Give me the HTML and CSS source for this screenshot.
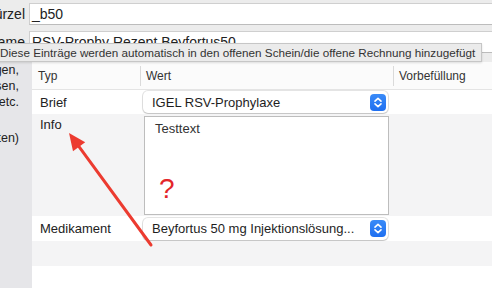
FILE: index.html
```html
<!DOCTYPE html>
<html lang="de">
<head>
<meta charset="utf-8">
<title>Vorlage</title>
<link rel="stylesheet" href="styles.css">
</head>
<body>
<div class="app">
  <div class="form-top">
    <div class="frow">
      <div class="flabel"><span>Kürzel</span></div>
      <div class="field">_b50</div>
    </div>
    <div class="frow">
      <div class="flabel"><span>Name</span></div>
      <div class="field">RSV-Prophy Rezept Beyfortus50</div>
    </div>
  </div>
  <div class="main">
    <div class="side">
      <div class="side-block"><span>Leistungen,<br>Diagnosen,<br>Medikamente etc.</span></div>
      <div class="side-block note"><span>(zu beachten)</span></div>
    </div>
    <div class="table">
      <div class="thead">
        <div class="th th-typ">Typ</div>
        <div class="sep"></div>
        <div class="th th-wert">Wert</div>
        <div class="sep"></div>
        <div class="th th-vor">Vorbefüllung</div>
      </div>
      <div class="tr tr-white">
        <div class="td td-typ">Brief</div>
        <div class="td td-wert">
          <div class="popup">
            <span class="popup-text">IGEL RSV-Prophylaxe</span>
            <span class="stepper"><svg width="16" height="17" viewBox="0 0 16 17"><path d="M5 7.2 L8 4.4 L11 7.2 M5 9.8 L8 12.6 L11 9.8" fill="none" stroke="#fff" stroke-width="1.6" stroke-linecap="round" stroke-linejoin="round"/></svg></span>
          </div>
        </div>
        <div class="td td-vor"></div>
      </div>
      <div class="tr tr-info">
        <div class="td td-typ td-top">Info</div>
        <div class="td td-wert td-top">
          <div class="textarea">
            <div class="ta-text">Testtext</div>
            <div class="qmark">?</div>
          </div>
        </div>
        <div class="td td-vor"></div>
      </div>
      <div class="tr tr-white tr-med">
        <div class="td td-typ">Medikament</div>
        <div class="td td-wert">
          <div class="popup">
            <span class="popup-text">Beyfortus 50 mg Injektionslösung...</span>
            <span class="stepper"><svg width="16" height="17" viewBox="0 0 16 17"><path d="M5 7.2 L8 4.4 L11 7.2 M5 9.8 L8 12.6 L11 9.8" fill="none" stroke="#fff" stroke-width="1.6" stroke-linecap="round" stroke-linejoin="round"/></svg></span>
          </div>
        </div>
        <div class="td td-vor"></div>
      </div>
      <div class="tr tr-empty"></div>
      <div class="tfill"></div>
    </div>
  </div>
  <div class="tooltip">Diese Einträge werden automatisch in den offenen Schein/die offene Rechnung hinzugefügt</div>
  <svg class="arrow" width="492" height="288" viewBox="0 0 492 288">
    <line x1="151" y1="245" x2="79" y2="146.7" stroke="#ec3b30" stroke-width="3" stroke-linecap="round"/>
    <polygon points="69,133 85.2,142.3 73,151.2" fill="#ec3b30"/>
  </svg>
</div>
</body>
</html>
```
FILE: styles.css
```css
* { box-sizing: border-box; }
html, body { margin: 0; padding: 0; }
body {
  width: 492px;
  height: 288px;
  overflow: hidden;
  background: #ececec;
  font-family: "Liberation Sans", Arial, sans-serif;
  color: #222;
}
.app {
  position: relative;
  width: 492px;
  height: 288px;
  display: flex;
  flex-direction: column;
  overflow: hidden;
}
.form-top {
  height: 62px;
  padding-top: 3px;
  display: flex;
  flex-direction: column;
  gap: 6px;
  margin-right: -12px;
}
.frow {
  display: flex;
  height: 22px;
}
.flabel {
  width: 29px;
  flex: none;
  display: flex;
  justify-content: flex-end;
  align-items: center;
  padding-right: 4px;
  overflow: hidden;
  font-size: 14px;
  color: #222;
  white-space: nowrap;
}
.flabel span { flex: none; }
.field {
  flex: 1;
  background: #fff;
  border: 1px solid #cfcfcf;
  border-bottom-color: #bcbcbc;
  padding-left: 2px;
  font-size: 14px;
  line-height: 20px;
  color: #222;
  white-space: nowrap;
}
.main {
  flex: 1;
  display: flex;
}
.side {
  width: 32px;
  flex: none;
  background: #e6e6e9;
  font-size: 12.5px;
  line-height: 16px;
  color: #222;
}
.side-block {
  display: flex;
  justify-content: flex-end;
  padding-right: 13px;
  overflow: hidden;
  white-space: nowrap;
}
.side-block span { flex: none; text-align: right; }
.side-block.note { margin-top: 20px; }
.table {
  flex: 1;
  display: flex;
  flex-direction: column;
  background: #fff;
}
.thead {
  height: 28px;
  display: flex;
  align-items: center;
  background: #fbfbfb;
  border-bottom: 1px solid #e4e4e4;
  font-size: 12px;
  color: #333;
}
.th { white-space: nowrap; }
.th-typ { width: 108px; padding-left: 6px; }
.th-wert { width: 252px; padding-left: 5px; }
.th-vor { flex: 1; padding-left: 5px; }
.sep {
  width: 1px;
  height: 20px;
  background: #dadada;
  flex: none;
}
.tr {
  display: flex;
  font-size: 13px;
  color: #222;
}
.tr-white { height: 24px; background: #fff; }
.tr-med { height: 25px; }
.tr-info { height: 102px; background: #f4f4f5; }
.tr-empty { height: 25px; background: #f4f4f5; }
.tfill { flex: 1; background: #fff; }
.td { display: flex; align-items: center; }
.td-top { align-items: flex-start; }
.td-typ { width: 108px; padding-left: 8px; }
.tr-info .td-typ { padding-top: 3px; line-height: 16px; }
.td-wert { width: 253px; padding-left: 3px; }
.td-vor { flex: 1; }
.popup {
  width: 245px;
  height: 22px;
  background: #fff;
  border-radius: 5px;
  box-shadow: 0 0 0 1px rgba(0,0,0,0.10), 0 1px 1.5px rgba(0,0,0,0.16);
  display: flex;
  align-items: center;
  padding-left: 9px;
  padding-right: 2px;
}
.popup-text { flex: 1; white-space: nowrap; overflow: hidden; color: #1e1e1e; }
.stepper {
  width: 16px;
  height: 17px;
  border-radius: 4px;
  background: linear-gradient(#3a8bf8, #1f6ff0);
  display: flex;
}
.textarea {
  margin-top: 2px;
  margin-left: 1px;
  width: 245px;
  height: 99px;
  background: #fff;
  border: 1px solid #bdbdbd;
  padding: 4px 0 0 10px;
}
.ta-text {
  line-height: 16px;
  color: #333;
  font-size: 13px;
}
.qmark {
  margin-top: 38px;
  margin-left: 4px;
  font-size: 28px;
  line-height: 28px;
  color: #e3262a;
}
.tooltip {
  position: absolute;
  top: 43px;
  left: -7px;
  height: 19px;
  padding: 0 6px;
  background: #ebebeb;
  border: 1px solid #c6c6c6;
  box-shadow: 0 1px 2px rgba(0,0,0,0.12);
  font-size: 11.7px;
  line-height: 17px;
  color: #333;
  white-space: nowrap;
}
.arrow {
  position: absolute;
  top: 0;
  left: 0;
  pointer-events: none;
}
```
